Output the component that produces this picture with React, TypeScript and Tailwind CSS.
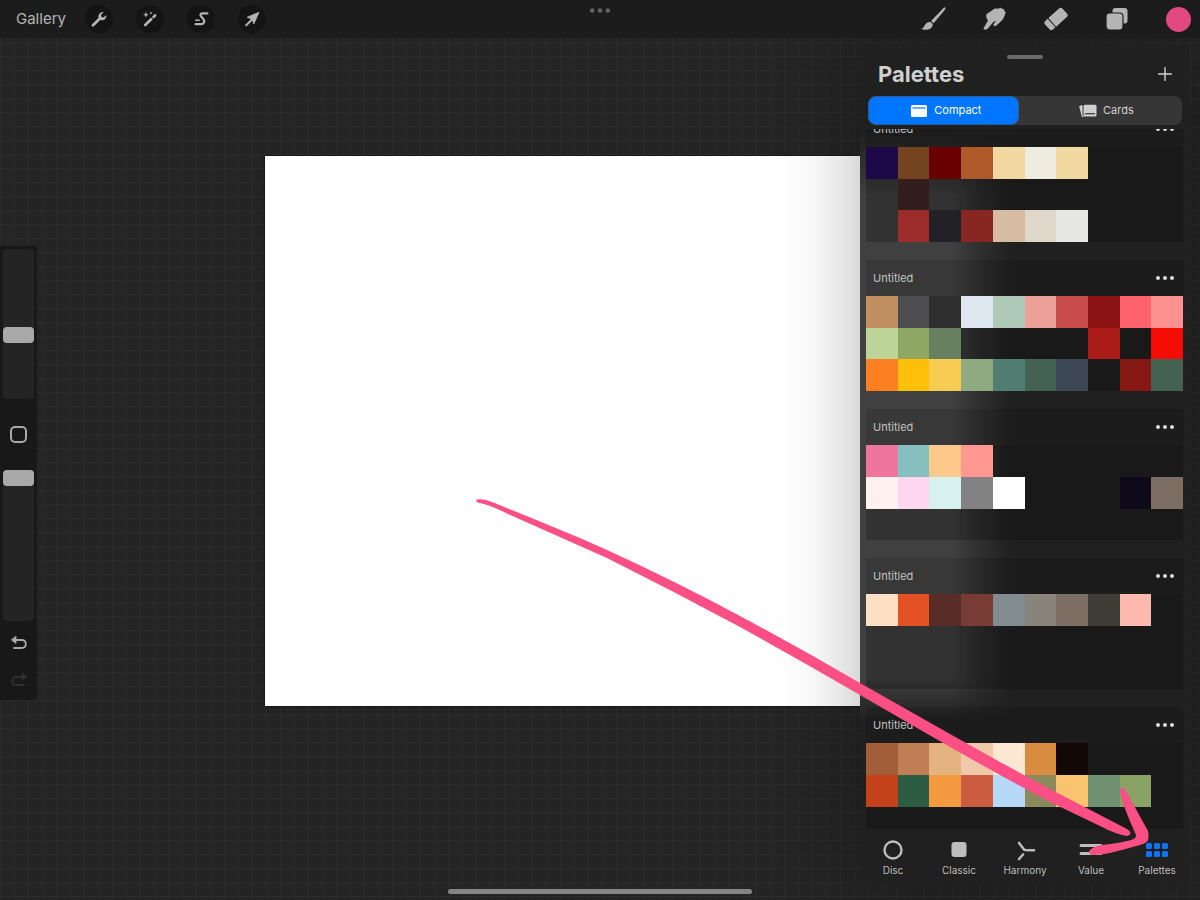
import { useState } from "react";
import type { ReactNode } from "react";
import { Plus } from "lucide-react";
import clsx from "clsx";

type Swatch = string | null;

const _ = null;

const palettes: Swatch[][] = [
  [
    "#1d0947", "#744420", "#690000", "#b05a2c", "#f0d8a0", "#eeece0", "#f0d8a0", _, _, _,
    _, "#321e1c", _, _, _, _, _, _, _, _,
    _, "#9c2c2a", "#222126", "#882622", "#d6bca0", "#e0d8cb", "#e6e7e5", _, _, _,
  ],
  [
    "#bf8f60", "#4d4d50", "#2e2e2e", "#dfe8f1", "#afcab8", "#eba09a", "#c74c4b", "#8b1313", "#fd626d", "#fd918f",
    "#bcd497", "#8fa764", "#668060", _, _, _, _, "#ab1c18", "#191919", "#f50c05",
    "#fc7f22", "#fdbf07", "#f8cc53", "#8daa80", "#517d70", "#436251", "#3c4654", "#191919", "#861814", "#436251",
  ],
  [
    "#ee769e", "#86bfbf", "#fec98a", "#fe9891", _, _, _, _, _, _,
    "#fff1f0", "#fdd6f0", "#d7f0f0", "#828282", "#ffffff", _, _, _, "#0e0a1a", "#7d6e64",
    _, _, _, _, _, _, _, _, _, _,
  ],
  [
    "#fddfc3", "#e45224", "#5a2c28", "#773c33", "#828c90", "#88847c", "#7d6f63", "#3e3c35", "#fdb9ad", _,
    _, _, _, _, _, _, _, _, _, _,
    _, _, _, _, _, _, _, _, _, _,
  ],
  [
    "#a15e38", "#bf7e53", "#e4b380", "#f2c8ab", "#fde7d2", "#d98b40", "#120906", _, _, _,
    "#c4431b", "#2c5c42", "#f49a40", "#cc5c40", "#b6d9f7", "#8b8a5a", "#fac46e", "#709272", "#8aa364", _,
    _, _, _, _, _, _, _, _, _, _,
  ],
];

function WrenchIcon() {
  return (
    <svg viewBox="0 0 20 20" className="size-5">
      <path
        d="M4 16.2 11.4 9"
        stroke="currentColor"
        strokeWidth="2.8"
        strokeLinecap="round"
      />
      <path
        d="M14.6 3.2a4.3 4.3 0 0 0-4.9 5.700l2.400 2.200a4.300 4.300 0 0 0 5.200-5.200l-2.800 2.600-2-.4-.5-2.100z"
        fill="currentColor"
      />
    </svg>
  );
}

function WandIcon() {
  return (
    <svg viewBox="0 0 20 20" className="size-5" fill="currentColor">
      <path
        d="M5.2 16 11.2 10.200M13.500 8l1.600-1.500"
        stroke="currentColor"
        strokeWidth="2.600"
        strokeLinecap="round"
      />
      <path d="m5.900 2.800.8 2.200 2.200.8-2.200.8-.8 2.200-.8-2.200-2.200-.8 2.200-.8zM11 2.400l.5 1.100 1.100.5-1.100.5-.5 1.100-.5-1.100-1.100-.5 1.100-.5z" />
    </svg>
  );
}

function SelectionIcon() {
  return (
    <svg
      viewBox="0 0 20 20"
      className="size-5"
      fill="none"
      stroke="currentColor"
      strokeWidth="2.200"
      strokeLinecap="round"
    >
      <path d="M16.400 4.400h-4.600c-2.300 0-3 1.500-1.800 2.900l2.500 2.900c1.600 2 .5 5-2.500 5H4.600" />
      <path d="M4.800 11.200h3.400" strokeWidth="1.600" />
    </svg>
  );
}

function TransformIcon() {
  return (
    <svg viewBox="0 0 20 20" className="size-5">
      <path
        d="M17 3.300 11.800 15l-1.500-4.800L5.200 8.200z"
        fill="currentColor"
        stroke="currentColor"
        strokeWidth=".8"
        strokeLinejoin="round"
      />
      <path d="m4.200 16.200 6-6" stroke="currentColor" strokeWidth="2" strokeLinecap="round" />
    </svg>
  );
}

function BrushIcon() {
  return (
    <svg viewBox="0 0 26 24" className="h-6 w-[26px]" fill="currentColor">
      <path d="M25.300.5c.8.600-.2 2-1 3L13.600 16.200l-2.500-2.100L22.600 2C23.600 1 24.700 0 25.300.5z" />
      <path d="M10.300 14.900l2.500 2.100c.1 2.600-1.600 4.800-4.600 5.400-2.400.5-5 .3-7.200-.4 1.700-.5 2.600-1.400 3.300-3 1-2.400 3-4.300 6-4.100z" />
    </svg>
  );
}

function SmudgeIcon() {
  return (
    <svg viewBox="0 0 24 24" className="size-6" fill="currentColor">
      <path d="M3.200 9.300c-.2-1.400.4-2.300 1.600-3L10 2.800C11 2 12 1.500 13.300 1.500l2.400.2c.7-1 2-1.200 2.800-.4l.5.600c1.300-.3 2.300.5 2.300 1.700l.1.500c1 .5 1.400 1.500.9 2.600l-1.700 4.400c-.4 1-1 1.800-1.800 2.500l-5.600 5.200c-.8.700-2 .6-2.500-.2-.4-.7-.2-1.400.3-2l2.200-2.600-2.600.8-5.500 6.400c-.7.800-1.700 1.300-2.800 1.300H1.500c-.9 0-1.200-.8-.8-1.600L5 13.400c-1-1-1.600-2.500-1.800-4.100z" />
    </svg>
  );
}

function EraserIcon() {
  return (
    <svg viewBox="0 0 24 24" className="size-6" fill="currentColor">
      <g transform="rotate(-42 12 12)">
        <path d="M7 6.200h14.300a2.500 2.500 0 0 1 2.500 2.500v6.600a2.500 2.500 0 0 1-2.500 2.500H7z" />
        <path d="M6 6.200H2.700A2.500 2.500 0 0 0 .2 8.700v6.600a2.500 2.500 0 0 0 2.500 2.500H6z" />
      </g>
    </svg>
  );
}

function LayersIcon() {
  return (
    <svg viewBox="0 0 24 24" className="size-6" fill="currentColor">
      <rect x="7.500" y="1" width="15" height="15.500" rx="3" />
      <rect x="1" y="6" width="17" height="17" rx="3.500" stroke="#1c1c1c" strokeWidth="1.200" />
    </svg>
  );
}

function UndoIcon({ flipped = false }: { flipped?: boolean }) {
  return (
    <svg
      viewBox="0 0 18 16"
      className={clsx("h-4 w-[18px]", flipped && "-scale-x-100")}
      fill="none"
      stroke="currentColor"
      strokeWidth="1.800"
      strokeLinecap="round"
    >
      <path d="M4 5h7.500c2.500 0 4.300 1.500 4.300 4s-1.800 4-4.300 4H4" />
      <path d="M6 1.500v7L1.500 5z" fill="currentColor" strokeWidth=".8" strokeLinejoin="round" />
    </svg>
  );
}

function CompactIcon() {
  return (
    <svg viewBox="0 0 16 12" className="h-3 w-4">
      <rect width="16" height="12" rx="1.500" fill="currentColor" />
      <path d="M1.500 3h13" stroke="#0076ff" strokeWidth="1.200" />
    </svg>
  );
}

function CardsIcon() {
  return (
    <svg viewBox="0 0 18 14" className="h-3.5 w-[18px]" fill="currentColor">
      <path d="M3.500 1 1 1.800c-.6.200-.8.600-.7 1.200l2.500 9.400c.2.600.6.900 1.200.7l1.500-.4c-1.200-.2-2-.9-2-2.200z" />
      <rect x="4.500" y=".8" width="13" height="11.700" rx="1.500" />
      <path d="M6 9.700h10" stroke="#363636" strokeWidth="1.200" />
    </svg>
  );
}

function Dots({ className }: { className: string }) {
  return (
    <svg viewBox="0 0 18 4" className={className} fill="currentColor">
      <circle cx="2" cy="2" r="2" />
      <circle cx="9" cy="2" r="2" />
      <circle cx="16" cy="2" r="2" />
    </svg>
  );
}

const leftTools = [
  { label: "Actions", icon: <WrenchIcon /> },
  { label: "Adjustments", icon: <WandIcon /> },
  { label: "Selection", icon: <SelectionIcon /> },
  { label: "Transform", icon: <TransformIcon /> },
];

const rightTools = [
  { label: "Brush", icon: <BrushIcon /> },
  { label: "Smudge", icon: <SmudgeIcon /> },
  { label: "Erase", icon: <EraserIcon /> },
  { label: "Layers", icon: <LayersIcon /> },
];

function Toolbar() {
  return (
    <header className="relative z-10 flex h-[38px] shrink-0 items-center justify-between bg-[#1c1c1c] pr-[9px] pl-4 text-[#b4b4b4]">
      <div className="flex items-center gap-[23px]">
        <button className="-mr-1 text-[15px]">Gallery</button>
        {leftTools.map((tool) => (
          <button
            key={tool.label}
            aria-label={tool.label}
            className="flex size-7 items-center justify-center rounded-full bg-[#141414]"
          >
            {tool.icon}
          </button>
        ))}
      </div>
      <button aria-label="Multitasking" className="absolute top-2 left-1/2 -translate-x-1/2 text-[#666]">
        <Dots className="h-[5px] w-5" />
      </button>
      <div className="flex items-center gap-[37px]">
        {rightTools.map((tool) => (
          <button key={tool.label} aria-label={tool.label}>
            {tool.icon}
          </button>
        ))}
        <button aria-label="Color" className="size-[25px] rounded-full bg-[#e2497f]" />
      </div>
    </header>
  );
}

function Slider({ label, value, className }: { label: string; value: number; className: string }) {
  return (
    <input
      type="range"
      aria-label={label}
      defaultValue={value}
      className={clsx(
        "w-[31px] appearance-none rounded-sm bg-[#242424] [direction:rtl] [writing-mode:vertical-lr]",
        "[&::-webkit-slider-thumb]:h-4 [&::-webkit-slider-thumb]:w-[31px] [&::-webkit-slider-thumb]:appearance-none [&::-webkit-slider-thumb]:rounded [&::-webkit-slider-thumb]:bg-[#a9a9a9]",
        className
      )}
    />
  );
}

function Sidebar() {
  return (
    <aside className="mt-[208px] flex w-[37px] shrink-0 flex-col items-center self-start rounded-r-sm bg-[#181818] pt-[3px] pb-3 text-[#a9a9a9]">
      <Slider label="Brush size" value={42} className="h-[150px]" />
      <button
        aria-label="Modify"
        className="my-[27px] size-[17px] rounded-[5px] border-2 border-current"
      />
      <Slider label="Brush opacity" value={100} className="h-[151px]" />
      <button aria-label="Undo" className="mt-[14px]">
        <UndoIcon />
      </button>
      <button aria-label="Redo" className="mt-[21px] text-[#303030]" disabled>
        <UndoIcon flipped />
      </button>
    </aside>
  );
}

function PaletteCard({ swatches }: { swatches: Swatch[] }) {
  return (
    <section className="shrink-0 bg-black/12">
      <div className="flex h-9 items-center justify-between pr-[9px] pl-[7px]">
        <h3 className="text-[11px] text-[#c2c2c2]">Untitled</h3>
        <button aria-label="Palette options" className="text-[#dcdcdc]">
          <Dots className="h-1 w-[18px]" />
        </button>
      </div>
      <div className="grid aspect-[10/3] grid-cols-10 grid-rows-3 bg-black/10">
        {swatches.map((color, i) => (
          <div key={i} style={color ? { backgroundColor: color } : undefined} />
        ))}
      </div>
    </section>
  );
}

const tabs: { label: string; icon: ReactNode }[] = [
  {
    label: "Disc",
    icon: <circle cx="12" cy="11" r="8.500" fill="none" stroke="currentColor" strokeWidth="2.400" />,
  },
  {
    label: "Classic",
    icon: <rect x="4.500" y="3" width="15" height="15" rx="3" fill="currentColor" />,
  },
  {
    label: "Harmony",
    icon: (
      <path
        d="m6 4 5.500 7 9.500.3M10 15.500 6 20"
        fill="none"
        stroke="currentColor"
        strokeWidth="2.600"
        strokeLinecap="round"
        strokeLinejoin="round"
      />
    ),
  },
  {
    label: "Value",
    icon: <path d="M2 6.500h20M2 14.500h20" stroke="currentColor" strokeWidth="3" strokeLinecap="round" />,
  },
  {
    label: "Palettes",
    icon: (
      <g fill="#0f74fb">
        {[1, 9, 17].map((x) => (
          <g key={x}>
            <rect x={x} y="4" width="6" height="6" rx="1.500" />
            <rect x={x} y="12" width="6" height="6" rx="1.500" />
          </g>
        ))}
      </g>
    ),
  },
];

function PalettesPanel() {
  const [view, setView] = useState("compact");

  return (
    <div className="relative mt-[7px] mr-[10px] mb-[15px] flex w-[330px] shrink-0 flex-col rounded-xl bg-[#202020] text-[#d0d0d0] shadow-[0_0_80px_rgba(0,0,0,0.3)]">
      {/* canvas light bleeding through the frosted panel */}
      <div className="absolute top-[90px] bottom-[165px] left-0 w-[152px] bg-linear-to-r from-[#404040] from-60% via-[#2e2e2e] via-80% to-[#202020] [mask-image:linear-gradient(to_bottom,transparent,black_60px,black_93%,transparent)]" />
      <div className="relative mx-auto mt-[10px] h-1 w-9 shrink-0 rounded-full bg-[#6a6a6a]" />
      <div className="relative flex h-[30px] shrink-0 items-center justify-between pr-[14px] pl-[18px]">
        <h2 className="text-[22px] font-bold">Palettes</h2>
        <button aria-label="New palette">
          <Plus className="size-[22px]" strokeWidth={1.5} />
        </button>
      </div>
      <div className="relative mx-2 mt-[7px] flex h-[29px] shrink-0 rounded-lg bg-[#363636] text-[11px]">
        <button
          onClick={() => setView("compact")}
          className={clsx(
            "flex w-[48%] items-center justify-center gap-[7px] rounded-lg border pl-1.5",
            view === "compact" ? "border-[#2a5f9e] bg-[#0076ff] text-white" : "border-transparent"
          )}
        >
          <CompactIcon />
          Compact
        </button>
        <button
          onClick={() => setView("cards")}
          className={clsx(
            "flex flex-1 items-center justify-center gap-1.5 rounded-lg border pl-3",
            view === "cards" ? "border-[#2a5f9e] bg-[#0076ff] text-white" : "border-transparent"
          )}
        >
          <CardsIcon />
          Cards
        </button>
      </div>
      <div className="relative mt-1 mr-[7px] ml-[6px] flex min-h-0 flex-1 flex-col overflow-hidden">
        <div className="-mt-[18px] flex flex-col gap-[18px]">
          {palettes.map((swatches, i) => (
            <PaletteCard key={i} swatches={swatches} />
          ))}
        </div>
      </div>
      <nav className="relative grid h-14 shrink-0 grid-cols-5 text-[#bdbdbd]">
        {tabs.map((tab) => (
          <button key={tab.label} className="flex flex-col items-center pt-[10px] text-[10px]">
            <svg viewBox="0 0 24 22" className="h-[22px] w-6">
              {tab.icon}
            </svg>
            <span className="mt-[2px]">{tab.label}</span>
          </button>
        ))}
      </nav>
    </div>
  );
}

function ArrowAnnotation() {
  return (
    <svg
      viewBox="0 0 1200 900"
      className="pointer-events-none absolute inset-0 z-20 size-full"
      fill="#fc4f86"
    >
      <path d="M477 499.500Q483 498 496 503.500C533 519 570 533 607 550Q675 581 740 616Q800 648 860 683L950 734L1000 762L1050 789L1100 815L1127 829Q1134 834 1127 836Q1115 834 1100 826L1050 802L1000 775L950 747L860 695Q800 660 740 627Q675 592 607 558L507 513.500Q490 505 478 502.500Q475 501 477 499.500z" />
      <path d="M1120 789q3-3 6 2l22 40q1 6 0 9-1 3-8 5-14 4-30 8-12 2-18 2-5-2-2-5 4-4 12-5 18-2 25-4 10-2 9-6-7-15-12-29-4-11-4-17z" />
    </svg>
  );
}

export default function App() {
  return (
    <div className="relative flex h-screen flex-col overflow-hidden bg-[#242424] bg-[linear-gradient(to_right,#2b2b2b_1px,transparent_1px),linear-gradient(to_bottom,#2b2b2b_1px,transparent_1px)] bg-size-[14px_14px] font-[Inter,'Liberation_Sans',sans-serif]">
      <Toolbar />
      <main className="flex min-h-0 flex-1">
        <Sidebar />
        <div className="flex flex-1 pt-[118px] pb-[194px] pl-[228px]">
          <div className="flex-1 bg-white shadow-[0_0_2px_#000]" />
        </div>
        <PalettesPanel />
      </main>
      <div className="absolute bottom-[6px] left-1/2 h-[5px] w-[304px] -translate-x-1/2 rounded-full bg-[#858585]" />
      <ArrowAnnotation />
    </div>
  );
}
